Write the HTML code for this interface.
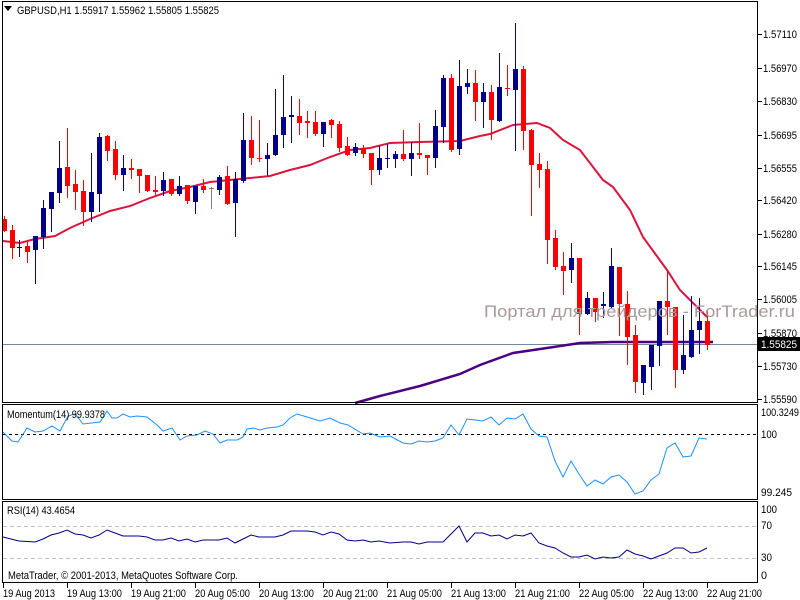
<!DOCTYPE html>
<html><head><meta charset="utf-8"><style>
html,body{margin:0;padding:0;background:#fff;width:800px;height:600px;overflow:hidden}
svg{display:block}
text{font-family:"Liberation Sans",sans-serif;font-size:11px;fill:#000}
</style></head><body>
<svg id="s" width="800" height="600" xmlns="http://www.w3.org/2000/svg">
<rect x="0" y="0" width="800" height="600" fill="#fff"/>
<g id="g"></g>
<rect x="2.5" y="1.5" width="755" height="401" fill="none" stroke="#000"/>
<rect x="2.5" y="404.5" width="755" height="95" fill="none" stroke="#000"/>
<rect x="2.5" y="501.5" width="755" height="81" fill="none" stroke="#000"/>
<path d="M4 6 L12 6 L8 11 Z" fill="#000"/>
<text x="17" y="14" textLength="202" lengthAdjust="spacingAndGlyphs">GBPUSD,H1  1.55917 1.55962 1.55805 1.55825</text>
<text x="484" y="317" textLength="311" lengthAdjust="spacingAndGlyphs" style="font-size:17px;fill:#a89a9a">Портал для трейдеров - ForTrader.ru</text>
<text x="7" y="418" textLength="98" lengthAdjust="spacingAndGlyphs">Momentum(14) 99.9378</text>
<text x="7" y="514" textLength="68" lengthAdjust="spacingAndGlyphs">RSI(14) 43.4654</text>
<text x="8" y="579" textLength="230" lengthAdjust="spacingAndGlyphs">MetaTrader, © 2001-2013, MetaQuotes Software Corp.</text>
</svg>
<script>
var g=document.getElementById('g'),h='';
function L(a,c,w){h+='<polyline fill="none" stroke="'+c+'" stroke-width="'+w+'" points="'+a.map(function(p){return p.join(',')}).join(' ')+'"/>';}
function T(x,y,s,w,st){h+='<text x="'+x+'" y="'+y+'" textLength="'+w+'" lengthAdjust="spacingAndGlyphs"'+(st?' style="'+st+'"':'')+'>'+s+'</text>';}
var C=[[4,'r',219,231,216,231],[12,'r',230,248,225,258],[19,'b',247,248,240,256],[27,'r',246,252,241,262],[35,'b',236,250,236,283],[43,'b',208,237,200,248],[51,'b',192,209,192,231],[59,'b',168,193,141,202],[67,'r',167,186,128,197],[75,'r',184,192,170,209],[83,'r',191,212,180,225],[91,'b',192,212,153,221],[99,'b',137,194,133,211],[107,'r',136,151,135,160],[115,'r',149,175,141,179],[123,'b',168,175,155,190],[131,'r',168,170,159,178],[139,'r',169,176,169,192],[147,'r',175,191,175,191],[155,'r',190,192,176,194],[163,'b',180,191,172,195],[171,'r',179,194,179,195],[179,'b',186,194,176,195],[187,'r',185,201,185,203],[195,'b',186,202,186,213],[203,'r',186,190,179,192],[211,'g',188,189,187,208],[219,'b',177,190,175,194],[227,'r',176,204,166,204],[235,'b',179,203,172,236],
[243,'b',140,181,113,182],[251,'r',140,158,116,164],[259,'r',158,159,120,161],[267,'b',155,159,143,175],[275,'b',135,155,89,155],[283,'b',117,135,75,147],[291,'b',115,117,96,142],[299,'r',116,123,99,134],[307,'r',121,123,111,137],[315,'r',122,134,111,135],[323,'b',122,134,122,146],[331,'r',120,125,119,137],[339,'r',124,148,121,151],[347,'r',146,155,137,155],[355,'b',147,153,143,155],[363,'r',148,154,145,157],[371,'r',153,170,153,184],[379,'b',158,170,146,174],[387,'b',158,159,144,167],[395,'b',154,159,151,167],[403,'r',154,159,130,160],[411,'b',153,159,142,175],[419,'r',153,155,123,158],[427,'r',155,158,155,174],[435,'b',126,158,110,167],[443,'b',78,127,75,142],[451,'r',78,150,74,151],[459,'b',86,149,60,154],[467,'b',83,87,69,93],[475,'r',83,102,70,120],[483,'b',92,102,83,127],
[491,'r',92,120,85,139],[499,'b',87,121,53,121],[507,'r',88,89,65,95],[515,'b',69,90,23,150],[523,'r',69,131,66,149],[531,'r',130,165,129,215],[539,'r',164,170,153,187],[547,'r',169,240,161,263],[555,'r',238,267,230,269],[563,'r',266,271,252,294],[571,'b',258,270,243,282],[579,'r',258,314,258,334],[587,'b',298,314,292,314],[595,'r',298,312,298,321],[603,'b',304,306,292,317],[611,'b',266,307,248,307],[619,'r',267,304,267,335],[627,'r',304,337,291,364],[635,'r',335,382,325,392],[643,'b',365,383,365,394],[651,'b',345,367,345,389],[659,'b',301,346,301,365],[667,'r',301,307,270,334],[675,'r',307,370,307,387],[683,'b',355,370,315,373],[691,'b',330,357,296,357],[699,'b',321,330,298,353],[707,'r',321,345,311,349]];
h+='<line x1="3" y1="344.5" x2="757" y2="344.5" stroke="#778899"/>';
L([[355,403],[380,396],[420,386],[460,374],[480,365],[513,353],[547,348],[580,343],[613,342],[713,342]],'#4b0082',2.5);
L([[3,241],[20,243],[35,239],[55,236],[70,228],[90,219],[110,211],[130,206],[150,198],[170,191],[190,187],[210,182],[230,180],[250,178],[270,176],[290,170],[310,165],[330,157],[350,150],[370,148],[390,143],[420,142],[460,141],[480,136],[490,134],[513,125],[537,123],[550,128],[563,140],[580,150],[603,180],[613,187],[630,210],[643,237],[667,270],[680,290],[707,317]],'#dc143c',2);
C.forEach(function(c){var col=c[1]=='b'?'#00008b':c[1]=='r'?'#ff0000':'#808080';
h+='<line x1="'+(c[0]+.5)+'" y1="'+c[4]+'" x2="'+(c[0]+.5)+'" y2="'+(c[5]+1)+'" stroke="'+col+'"/>';
h+='<rect x="'+(c[0]-2)+'" y="'+c[2]+'" width="5" height="'+Math.max(1,c[3]-c[2])+'" fill="'+col+'"/>';});
var P=[['1.57110',34],['1.56970',68],['1.56830',101],['1.56695',135],['1.56555',168],['1.56420',200],['1.56280',234],['1.56145',266],['1.56005',299],['1.55870',333],['1.55730',366],['1.55590',399]];
P.forEach(function(p){h+='<line x1="758" y1="'+(p[1]+.5)+'" x2="762" y2="'+(p[1]+.5)+'" stroke="#000"/>';T(763,p[1]+4,p[0],34);});
h+='<rect x="758" y="337" width="42" height="14" fill="#000"/>';T(761,348,'1.55825',36,'fill:#fff');
h+='<line x1="3" y1="434.5" x2="757" y2="434.5" stroke="#000" stroke-dasharray="3,3"/>';
T(761,416,'100.3249',38);T(761,438,'100',16);T(761,496,'99.245',31);
L([[3,432],[12,441],[18,442],[27,428],[35,432],[43,431],[52,426],[60,431],[68,416],[75,414],[83,424],[100,422],[107,411],[112,418],[117,418],[123,414],[130,417],[137,416],[147,417],[157,425],[163,431],[172,428],[180,440],[187,436],[197,435],[205,431],[213,434],[220,443],[227,440],[237,440],[243,437],[247,429],[253,428],[260,430],[267,428],[277,427],[283,425],[290,418],[297,414],[307,417],[320,421],[330,418],[340,423],[348,425],[363,434],[370,433],[380,437],[390,436],[403,443],[411,444],[419,441],[427,442],[435,441],[443,438],[451,425],[459,435],[467,419],[475,420],[483,421],[491,417],[499,425],[507,418],[515,419],[523,414],[531,429],[539,436],[547,437],[555,461],[563,477],[571,461],[579,474],[587,486],[595,480],[603,484],[611,477],[619,475],[627,482],[635,494],[643,491],[651,480],[659,474],[667,448],[675,443],[683,457],[691,456],[699,438],[707,439]],'#1e90ff',1);
h+='<line x1="3" y1="526.5" x2="757" y2="526.5" stroke="#c0c0c0" stroke-dasharray="4,3"/><line x1="3" y1="558.5" x2="757" y2="558.5" stroke="#c0c0c0" stroke-dasharray="4,3"/>';
T(761,513,'100',16);T(761,529,'70',11);T(761,561,'30',11);T(761,579,'0',6);
L([[3,537],[19,541],[35,542],[43,539],[51,535],[59,533],[67,530],[75,534],[83,535],[91,538],[99,535],[107,530],[115,533],[123,536],[139,536],[147,537],[155,540],[163,540],[171,538],[179,541],[187,539],[195,542],[203,540],[219,540],[227,538],[235,543],[243,539],[251,535],[259,537],[275,537],[283,535],[291,531],[307,531],[315,532],[323,535],[331,532],[339,534],[347,540],[355,541],[363,540],[371,542],[379,541],[390,543],[403,542],[411,542],[419,544],[427,542],[435,542],[443,542],[451,534],[459,526],[467,542],[475,533],[483,533],[491,536],[499,535],[507,539],[515,535],[523,536],[531,533],[539,543],[547,546],[555,548],[563,553],[571,557],[579,557],[587,555],[595,559],[603,557],[611,558],[619,557],[627,550],[635,554],[643,556],[651,559],[659,556],[667,553],[675,548],[683,548],[691,553],[699,552],[707,548]],'#00008b',1);
var TT=[[3,'19 Aug 2013',52],[67,'19 Aug 13:00',55],[131,'19 Aug 21:00',55],[195,'20 Aug 05:00',55],[259,'20 Aug 13:00',55],[323,'20 Aug 21:00',55],[387,'21 Aug 05:00',55],[451,'21 Aug 13:00',55],[515,'21 Aug 21:00',55],[579,'22 Aug 05:00',55],[643,'22 Aug 13:00',55],[707,'22 Aug 21:00',55]];
TT.forEach(function(t){h+='<line x1="'+(t[0]+.5)+'" y1="583" x2="'+(t[0]+.5)+'" y2="588" stroke="#000"/>';T(t[0],597,t[1],t[2]);});
g.innerHTML=h;
</script>
</body></html>
